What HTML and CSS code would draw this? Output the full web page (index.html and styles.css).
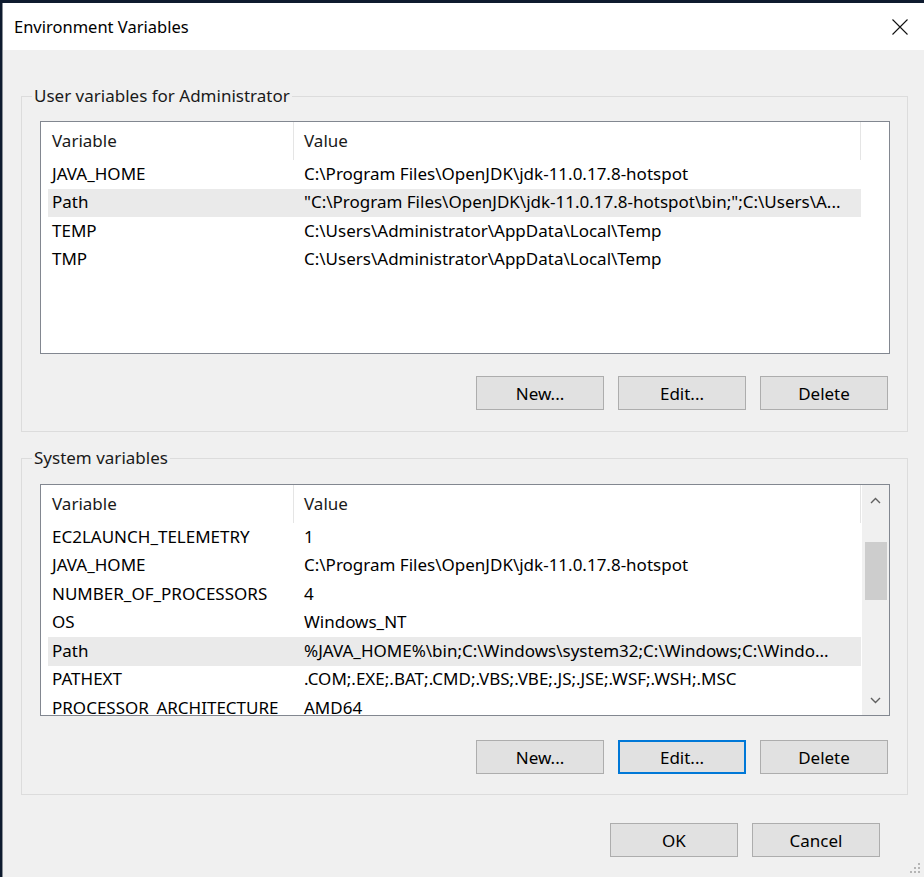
FILE: index.html
```html
<!DOCTYPE html>
<html lang="en">
<head>
  <meta charset="UTF-8">
  <title>Environment Variables</title>
  <link rel="stylesheet" href="styles.css">
</head>
<body>

  <div class="window">
    <div class="titlebar">
      <span class="title">Environment Variables</span>
      <svg class="close" width="18" height="18" viewBox="0 0 18 18">
        <path d="M1.5 1.5 L16.5 16.5 M16.5 1.5 L1.5 16.5" stroke="#111" stroke-width="1.1" fill="none"/>
      </svg>
    </div>

    <div class="content">
      <fieldset class="group">
        <legend>User variables for Administrator</legend>
        <div class="list user-list">
          <div class="list-body">
            <div class="list-head">
              <div class="hcell name">Variable</div>
              <div class="hcell value">Value</div>
            </div>
            <div class="row"><div class="cell name">JAVA_HOME</div><div class="cell value">C:\Program Files\OpenJDK\jdk-11.0.17.8-hotspot</div></div>
            <div class="row selected"><div class="cell name">Path</div><div class="cell value">"C:\Program Files\OpenJDK\jdk-11.0.17.8-hotspot\bin;";C:\Users\A...</div></div>
            <div class="row"><div class="cell name">TEMP</div><div class="cell value">C:\Users\Administrator\AppData\Local\Temp</div></div>
            <div class="row"><div class="cell name">TMP</div><div class="cell value">C:\Users\Administrator\AppData\Local\Temp</div></div>
          </div>
        </div>
        <div class="btn-row">
          <button class="btn">New...</button>
          <button class="btn">Edit...</button>
          <button class="btn">Delete</button>
        </div>
      </fieldset>

      <fieldset class="group system">
        <legend>System variables</legend>
        <div class="list system-list">
          <div class="list-body">
            <div class="list-head">
              <div class="hcell name">Variable</div>
              <div class="hcell value">Value</div>
            </div>
            <div class="row"><div class="cell name">EC2LAUNCH_TELEMETRY</div><div class="cell value">1</div></div>
            <div class="row"><div class="cell name">JAVA_HOME</div><div class="cell value">C:\Program Files\OpenJDK\jdk-11.0.17.8-hotspot</div></div>
            <div class="row"><div class="cell name">NUMBER_OF_PROCESSORS</div><div class="cell value">4</div></div>
            <div class="row"><div class="cell name">OS</div><div class="cell value">Windows_NT</div></div>
            <div class="row selected"><div class="cell name">Path</div><div class="cell value">%JAVA_HOME%\bin;C:\Windows\system32;C:\Windows;C:\Windo...</div></div>
            <div class="row"><div class="cell name">PATHEXT</div><div class="cell value">.COM;.EXE;.BAT;.CMD;.VBS;.VBE;.JS;.JSE;.WSF;.WSH;.MSC</div></div>
            <div class="row"><div class="cell name">PROCESSOR_ARCHITECTURE</div><div class="cell value">AMD64</div></div>
          </div>
          <div class="scrollbar">
            <div class="sb-btn">
              <svg width="11" height="7" viewBox="0 0 11 7"><path d="M1 6 L5.5 1.5 L10 6" stroke="#606060" stroke-width="1.4" fill="none"/></svg>
            </div>
            <div class="sb-track"><div class="sb-thumb"></div></div>
            <div class="sb-btn">
              <svg width="11" height="7" viewBox="0 0 11 7"><path d="M1 1 L5.5 5.5 L10 1" stroke="#606060" stroke-width="1.4" fill="none"/></svg>
            </div>
          </div>
        </div>
        <div class="btn-row system-btns">
          <button class="btn">New...</button>
          <button class="btn focused">Edit...</button>
          <button class="btn">Delete</button>
        </div>
      </fieldset>
    </div>

    <div class="footer">
      <button class="btn">OK</button>
      <button class="btn">Cancel</button>
    </div>

    <svg class="grip" width="12" height="12" viewBox="0 0 12 12">
      <rect x="9" y="1" width="2" height="2" fill="#b5b5b5"/>
      <rect x="5" y="5" width="2" height="2" fill="#b5b5b5"/>
      <rect x="9" y="5" width="2" height="2" fill="#b5b5b5"/>
      <rect x="1" y="9" width="2" height="2" fill="#b5b5b5"/>
      <rect x="5" y="9" width="2" height="2" fill="#b5b5b5"/>
      <rect x="9" y="9" width="2" height="2" fill="#b5b5b5"/>
    </svg>
  </div>

</body>
</html>
```

FILE: styles.css
```css
* {
  box-sizing: border-box;
}

body {
  margin: 0;
  background: #0e1b2f;
  font-family: 'Noto Sans', 'Open Sans', sans-serif;
  font-size: 17px;
  color: #000;
}

.window {
  position: relative;
  margin: 3px 0 0 2px;
  height: 874px;
  background: #f0f0f0;
  border-left: 1px solid #8a8f96;
}

.titlebar {
  height: 47px;
  background: #fff;
  display: flex;
  align-items: center;
  justify-content: space-between;
  padding: 0 15px 0 11px;
}

.title {
  font-size: 16.5px;
  color: #000;
}

.content {
  padding: 35px 16px 0 18px;
}

.group {
  margin: 0;
  border: 1px solid #dcdcdc;
  padding: 14px 17px 21px 18px;
}

.group legend {
  margin-left: -8px;
  padding: 0 2px;
  line-height: 22px;
  color: #1a1a1a;
}

.group.system {
  margin-top: 15px;
  padding-top: 15px;
  padding-bottom: 20px;
}

.list {
  display: flex;
  height: 233px;
  background: #fff;
  border: 1px solid #828790;
  overflow: hidden;
}

.system-list {
  height: 232px;
}

.list-body {
  flex: 1;
  padding-left: 7px;
}

.list-head {
  display: flex;
  height: 38px;
  width: 813px;
}

.hcell {
  display: flex;
  align-items: center;
  padding-bottom: 2px;
  border-right: 1px solid #e5e5e5;
  color: #1a1a1a;
}

.hcell.name {
  width: 246px;
  padding-left: 4px;
}

.hcell.value {
  flex: 1;
  padding-left: 10px;
}

.row {
  display: flex;
  align-items: center;
  height: 28.5px;
  width: 813px;
  padding-bottom: 2px;
  white-space: nowrap;
}

.row.selected {
  background: #eaeaea;
}

.cell {
  padding-left: 4px;
}

.cell.name {
  width: 252px;
}

.scrollbar {
  width: 27px;
  background: #f0f0f0;
  display: flex;
  flex-direction: column;
}

.sb-btn {
  height: 30px;
  display: flex;
  align-items: center;
  justify-content: center;
}

.sb-track {
  flex: 1;
}

.sb-thumb {
  width: 22px;
  height: 58px;
  margin: 27px auto 0;
  background: #cdcdcd;
}

.btn-row {
  display: flex;
  justify-content: flex-end;
  gap: 14px;
  margin-top: 22px;
  margin-right: 2px;
}

.system-btns {
  margin-top: 24px;
}

.btn {
  width: 128px;
  height: 34px;
  background: #e1e1e1;
  border: 1px solid #adadad;
  font-family: inherit;
  font-size: 17px;
  color: #000;
  padding: 0;
}

.btn.focused {
  border-color: #0078d7;
  box-shadow: inset 0 0 0 1px #0078d7;
}

.footer {
  display: flex;
  justify-content: flex-end;
  gap: 14px;
  padding: 28px 44px 0 0;
}

.grip {
  position: absolute;
  right: 3px;
  bottom: 3px;
}
```
